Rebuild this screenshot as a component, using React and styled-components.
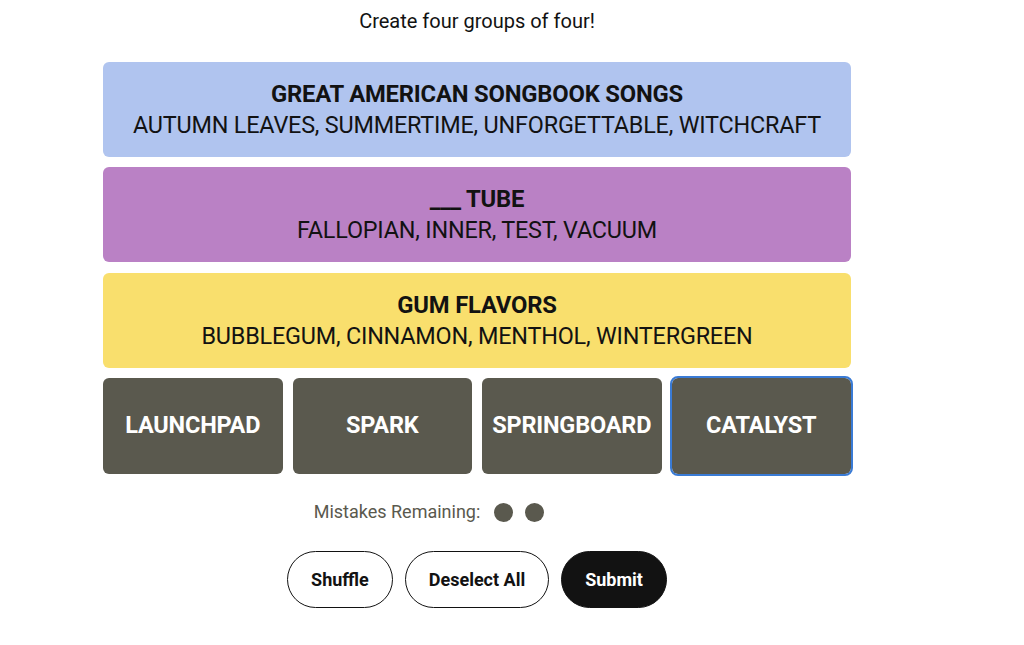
import React from "react";
import styled, { createGlobalStyle } from "styled-components";

const Global = createGlobalStyle`
  html, body { margin: 0; padding: 0; background: #fff; }
  body { font-family: "Roboto", "Liberation Sans", sans-serif; color: #121212; }
`;

const Page = styled.div`
  width: 748px;
  margin-left: 103px;
  display: flex;
  flex-direction: column;
  align-items: center;
`;

const Prompt = styled.p`
  margin: 9px 0 0;
  font-size: 20px;
  line-height: 24px;
  color: #121212;
`;

const Board = styled.div`
  margin-top: 29px;
  width: 100%;
  display: flex;
  flex-direction: column;
  gap: 10.3px;
`;

const Solved = styled.div`
  height: 95px;
  border-radius: 6px;
  background: ${(p) => p.$bg};
  display: flex;
  flex-direction: column;
  align-items: center;
  justify-content: center;
  gap: 3px;
`;

const Category = styled.div`
  font-weight: 700;
  font-size: 23.8px;
  line-height: 28px;
  letter-spacing: -0.2px;
`;

const Members = styled.div`
  font-size: 23.4px;
  line-height: 28px;
  letter-spacing: -0.2px;
`;

const Row = styled.div`
  display: grid;
  grid-template-columns: repeat(4, 1fr);
  gap: 10px;
`;

const Tile = styled.div`
  height: 96.5px;
  padding-bottom: 2px;
  border-radius: 6px;
  background: #5a594e;
  color: #fff;
  display: flex;
  align-items: center;
  justify-content: center;
  font-weight: 700;
  font-size: 23.5px;
  letter-spacing: -0.2px;
  box-sizing: border-box;
  ${(p) => (p.$selected ? "outline: 2px solid #3a7bd5; outline-offset: 0px;" : "")}
`;

const Mistakes = styled.div`
  margin-top: 27px;
  margin-right: 96px;
  display: flex;
  align-items: center;
  gap: 14px;
  font-size: 18px;
  line-height: 22px;
  color: #5a594e;
`;

const Dots = styled.div`
  display: flex;
  gap: 12px;
`;

const Dot = styled.span`
  width: 19px;
  height: 19px;
  border-radius: 50%;
  background: #5a594e;
`;

const Controls = styled.div`
  margin-top: 28px;
  display: flex;
  gap: 12px;
`;

const Pill = styled.button`
  height: 57px;
  padding: 0 23px;
  border-radius: 30px;
  border: 1px solid #121212;
  background: ${(p) => (p.$dark ? "#121212" : "#fff")};
  color: ${(p) => (p.$dark ? "#fff" : "#121212")};
  font-family: "Roboto", "Liberation Sans", sans-serif;
  font-weight: 700;
  font-size: 18px;
  cursor: pointer;
`;

const groups = [
  { bg: "#b0c4ef", title: "GREAT AMERICAN SONGBOOK SONGS", items: "AUTUMN LEAVES, SUMMERTIME, UNFORGETTABLE, WITCHCRAFT" },
  { bg: "#ba81c5", title: "___ TUBE", items: "FALLOPIAN, INNER, TEST, VACUUM" },
  { bg: "#f9df6d", title: "GUM FLAVORS", items: "BUBBLEGUM, CINNAMON, MENTHOL, WINTERGREEN" },
];

const tiles = ["LAUNCHPAD", "SPARK", "SPRINGBOARD", "CATALYST"];

export default function App() {
  return (
    <>
      <Global />
      <Page>
        <Prompt>Create four groups of four!</Prompt>
        <Board>
          {groups.map((g) => (
            <Solved key={g.title} $bg={g.bg}>
              <Category>{g.title}</Category>
              <Members>{g.items}</Members>
            </Solved>
          ))}
          <Row>
            {tiles.map((t) => (
              <Tile key={t} $selected={t === "CATALYST"}>{t}</Tile>
            ))}
          </Row>
        </Board>
        <Mistakes>
          Mistakes Remaining:
          <Dots>
            <Dot />
            <Dot />
          </Dots>
        </Mistakes>
        <Controls>
          <Pill>Shuffle</Pill>
          <Pill>Deselect All</Pill>
          <Pill $dark>Submit</Pill>
        </Controls>
      </Page>
    </>
  );
}
